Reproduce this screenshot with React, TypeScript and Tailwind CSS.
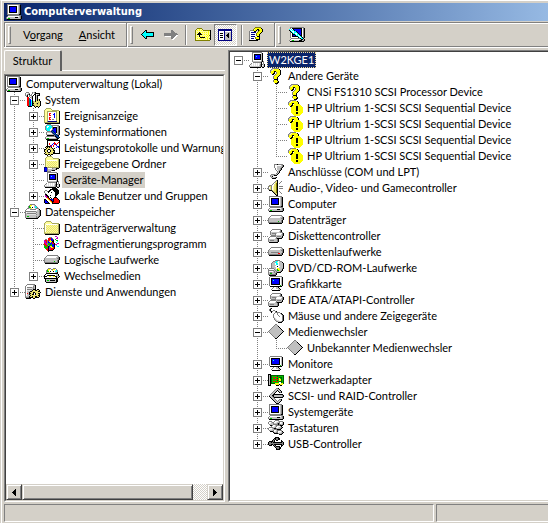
import { useState } from 'react'
import type { ReactNode } from 'react'
import clsx from 'clsx'

// 16-colour style palette for the small icons
const palette: Record<string, string> = {
  k: '#000000',
  d: '#404040',
  g: '#808080',
  s: '#c0c0c0',
  h: '#e0e0e0',
  w: '#ffffff',
  b: '#0000ff',
  n: '#000080',
  y: '#ffff00',
  l: '#ffff99',
  a: '#a8a860',
  p: '#e8e070',
  o: '#808000',
  r: '#ff0000',
  e: '#00c000',
  f: '#006000',
  c: '#00ffff',
  t: '#008080',
  m: '#c000c0',
}

const sprites: Record<string, string[]> = {
  computer: [
    '.ggggggggggggg..',
    '.gwwwwwwwwwwsgk.',
    '.gwkkkkkkkkwsgk.',
    '.gwkbbbbbbkwsgk.',
    '.gwkbbbbbbkwsgk.',
    '.gwkbbbbbbkwsgk.',
    '.gwkbbbbbbkwsgk.',
    '.gwkbbbbbbkwsgk.',
    '.gwkkkkkkkkwsgk.',
    '.gwwwwwwwwwwsgk.',
    '.ggggggggggggkk.',
    '..ggggggggggggg.',
    '.gwwwwwwwwwwwsgk',
    'gwssssssskkkssgk',
    'gseessssssssssgk',
    '.kkkkkkkkkkkkkk.',
  ],
  pc: [
    '...gggggggggg...',
    '...gwwwwwwwwsk..',
    '...gwkkkkkkksk..',
    '...gwkbbbbbksk..',
    '...gwkbcbbbksk..',
    '...gwkbbbbbksk..',
    '...gwkbbbbbksk..',
    '...gwkkkkkkksk..',
    '...gwwwwwwwwsk..',
    '...gssssssssgkg.',
    '....ggggggggk.g.',
    '..gwhwhwhwhsk.g.',
    '.ghwhwhwhwhgkgsk',
    'gwhwhwhwhwsgkwsk',
    'gssssssssssgkssk',
    '.kkkkkkkkkkk.kk.',
  ],
  tools: [
    '.ggg...gsgk.....',
    'gwwsg..gwskkkkk.',
    'gwggk.gwwkkwssk.',
    'gsk.gggwk.kskkk.',
    '.gk.gwsk..ksk...',
    '..rr.gsk..ksk...',
    '..rrt.sk..ksk...',
    '..rrtbwk..kskpk.',
    '..rrtbck..kpkpk.',
    '..rrtbckapkppppk',
    '..rrtbckappppapk',
    '..rrtbckkppakppk',
    '..rrtbckapppappk',
    '..rrtbckkapppppk',
    '...kkkk..kpkkpk.',
    '..........k..k..',
  ],
  events: [
    '..aaaaa.........',
    '.allllla........',
    'alllllllaaaaaaa.',
    'allaaaaaaaaaallk',
    'allawwwwwwwwallk',
    'allawrrwwwbwallk',
    'allawrwwwbbwallk',
    'allawrrwwwbwallk',
    'allawwwwwwbwallk',
    'allawrrwwwbwallk',
    'allawrwwwwwwallk',
    'allawrrwggwwallk',
    'allawwwwwwwwallk',
    'allgnnnnnnnnnllk',
    'aaaaaaaaaaaaaaak',
    '.kkkkkkkkkkkkkkk',
  ],
  sysinfo: [
    '...gggg.........',
    '..gccccgggggggg.',
    '.gcwwcccgwwwwsgk',
    '.gcwccccgkkkksgk',
    '.gcccccwgkbbksgk',
    '.gccccwwgbbbksgk',
    '..gcccwgnbbbksgk',
    '...ggggntnbbksgk',
    '..gssssgntnbksgk',
    '..gwwwwwgntnwsgk',
    '..gssssssgntnggk',
    '...kkkkkkkgntnk.',
    '..gggggggggkntn.',
    '.gwwwwwwwwwskntk',
    '.gseesssssssgkk.',
    '..kkkkkkkkkkkk..',
  ],
  perf: [
    '...kkkkkkkkkkkkk',
    '...kwwwwwwwwwwwk',
    '...kwwwwwwrwwwrk',
    '...kwrwwwbrrwrwk',
    '...kwrwwbwrbrwwk',
    '...kwwrbwrwwbwwk',
    '..kkkkbrwrwwwbbk',
    '.kpkpkpkwwwwbwbk',
    '..kpppppkpkwwwwk',
    'kkppkkpppkwwwwwk',
    'kppkwwkppkkwwwwk',
    'kppkwwkpppkwwwwk',
    '.kppkkpppkkwwwwk',
    'kppppppppkkkkkkk',
    '.kkpkkpkk.......',
    '...k..k.........',
  ],
  shared: [
    '...aaaaa........',
    '..allllla.......',
    '.alllllllaaaaaa.',
    '.allllllllllllak',
    '.alwwwwwwwwwwlak',
    '.alplplplplpllak',
    '.allplplplplplak',
    '.alplplplplpllak',
    '.allplplplplplak',
    '.alplplplplpllak',
    '.allplplplplplak',
    'nnnaaaaaaaaaaaak',
    'nbbgwwwwgssskkk.',
    'nbbgsssssssgk...',
    'nbbgsssgkkk.....',
    'nnngggg.........',
  ],
  users: [
    '........kkkkk...',
    '......kkkkkkkk..',
    '.gg..kkwwkkkkkk.',
    'gwwgkkwwwwkkkkk.',
    'gwwwkwwkwwwkkkk.',
    '.gwwwwwwwwwkkkk.',
    '.kkwwwwwwwwkkk..',
    '.mkkwwkwwwwkk...',
    '.mmkkwwwwwwk....',
    '..mrk.kwwwkkk...',
    '...yrk.kwkrrrk..',
    'kk..yrkbbkrrrrk.',
    'kbk..yrkbkrrrrrk',
    'kbbk..yrkkrrrrrk',
    'kbbbk..ykrrrrrrk',
    '.kkkkk..kkkkkkk.',
  ],
  storage: [
    '.....ggggg......',
    '....gyywwsg.....',
    '...geywwwscg....',
    '...geewkwsccg...',
    '..ggssywwwsggg..',
    '.gwwwggggggwwsk.',
    'gwwwwwwwwwwwssgk',
    'gggggggggggsssgk',
    'gwhhhhhhhhhgssgk',
    'gsgggggggggsssgk',
    'gshhhhhhhhhgssgk',
    'gsssssssssssssgk',
    'gseesssssssgsgk.',
    'gssssssssssggk..',
    '.kkkkkkkkkkkk...',
    '................',
  ],
  folder: [
    '................',
    '..aaaaa.........',
    '.allllla........',
    'alllllllaaaaaaa.',
    'alwwwwwwwwwwwlak',
    'awplplplplplplak',
    'awlplplplplplpak',
    'awplplplplplplak',
    'awlplplplplplpak',
    'awplplplplplplak',
    'awlplplplplplpak',
    'awplplplplplplak',
    'aplplplplplplpak',
    'aaaaaaaaaaaaaaak',
    '.kkkkkkkkkkkkkk.',
    '................',
  ],
  defrag: [
    '...........mm...',
    '.....ggg.....m..',
    '....rrrbg...mm..',
    '.gg.rrrbbg.e....',
    'mrrgrrybbk..ee..',
    'mmrgbyyykk...c..',
    'mmrgbbybrk..c...',
    'rmmgeebbrrk..mm.',
    'rrmgeebebbkmm...',
    'erregeeebbk.c...',
    'eerekbyybbk..cc.',
    'eeeekmmyyrk.....',
    '.eerkmmrrrk.....',
    '..rrkmrrrk......',
    '...rkkkkk.......',
    '....k...........',
  ],
  disk: [
    '................',
    '................',
    '................',
    '...ggggggggggg..',
    '..gwwwwwwwwwwsg.',
    '.gwwwwwwwwwwssgk',
    'gssssssssssssggk',
    'gsssssssssssssgk',
    'gssssssssssssgk.',
    'gsssssssssessgk.',
    'ggggggggggggggk.',
    '.kkkkkkkkkkkkk..',
    '................',
    '................',
    '................',
    '................',
  ],
  removable: [
    '....ggg..ggg....',
    '...gyywggyywg...',
    '..geywwwywwscg..',
    '..geewkwwkwccg..',
    '..gssywwwwwsgk..',
    '..kkkkkkkkkkkk..',
    '.kwwwwwwwwwwssk.',
    'kwwkkkkkkkkwssk.',
    'kkkwwyywwyykkssk',
    'kwwwwwwwwwwwksk.',
    'kkkkkkkkkkkkkk..',
    '.ksssssssssskk..',
    '.kseeskkkkkskk..',
    '.ksssssssssskk..',
    '..kkkkkkkkkkk...',
    '................',
  ],
  services: [
    '..gggggggg......',
    '.gwwwwwwsgk.....',
    'gwwwwwwwgsk.....',
    'gwgggggsgsk.....',
    'gwhhhhhsgsk.....',
    'gwgggggskkk.kk..',
    'gwhhhhskppkkppk.',
    'gwssskkppppppkk.',
    'gwsskpppkkpppppk',
    'gwrskkppkwkppkk.',
    'gwsskppkkwkpppk.',
    'gwssskpppppppkk.',
    'gssskppkppkkppk.',
    'ggggkkkkppkkkk..',
    '.kkkkk..kk......',
    '................',
  ],
  question: [
    '....ggggggg.....',
    '...gslyyyyyk....',
    '..gslyyyyyyyk...',
    '..gyyykkyyyyk...',
    '..gyyyk.gyyyk...',
    '...yykk.gyyyk...',
    '....kk.gyyyyk...',
    '......gyyyyk....',
    '.....gyyyyk.....',
    '.....gyyyk......',
    '.....gyyyk......',
    '......kkkk......',
    '.....gyyyk......',
    '.....gyyyyk.....',
    '......yyykk.....',
    '.......kkk......',
  ],
  warning: [
    '...gggggg.......',
    '..gslyyyyyk.....',
    '.gslyyyyyyyk....',
    '.gyyykkyyyyk....',
    '.gyyyk.yyyyyy...',
    '..yykkyyyyyyyy..',
    '...kkyyyykkyyyy.',
    '....yyyyykkyyyyy',
    '....yyyyykkyyyyy',
    '....yyyyykkyyyyy',
    '....yyyyykkyyyyy',
    '....yyyyyyyyyyyy',
    '....yyyyykkyyyyy',
    '.....yyyykkyyyy.',
    '......yyyyyyyy..',
    '.......yyyyyy...',
  ],
  port: [
    '......gggkggggg.',
    '......gwwwwwwsgk',
    '......gwwsssssgk',
    '......gwwssssgk.',
    '.......gwsssgk..',
    '.......gwsssgk..',
    '........gwsgk...',
    '.........gsk....',
    '.........gsk....',
    '........gsk.....',
    '...ggggssk......',
    '..gssskkk.......',
    '..gsk...........',
    '...gsssgk.......',
    '....kkkk........',
    '................',
  ],
  audio: [
    '........gk......',
    '.......gpk...g..',
    '......gppk..g...',
    '.....gwpok.g....',
    '....gwppok......',
    '.gggwwppok......',
    'gapgwlppok.gggg.',
    'gwpgwlppok......',
    'gwpgwlppok.gggg.',
    'gapgwlppok......',
    '.kkkalppok......',
    '....kappok.g....',
    '.....kapok..g...',
    '......kapk...g..',
    '.......kak......',
    '........kk......',
  ],
  floppyCtl: [
    '................',
    '....ggggggggg...',
    '...gwwwwwwwwgk..',
    '..gwwwwwwwwsgk..',
    '..gsssssssssggg.',
    '..gsggggswwwwwgk',
    '..gssssgwwwwwsgk',
    '...gggggssssssgk',
    '..ggggggsggggsk.',
    '.gwwwwwwgssssgk.',
    'gwwwwwwsgkkkkk..',
    'gssssssssgk.....',
    'gsggggsssgk.....',
    'gssssssssgk.....',
    '.kkkkkkkkk......',
    '................',
  ],
  floppy: [
    '................',
    '................',
    '................',
    '...ggggggggggg..',
    '..gwwwwwwwwwwsg.',
    '.gwwwwwwwwwwssgk',
    'gssssssssssssggk',
    'gsssssssssssssgk',
    'gssggggggggsssgk',
    'gsssssssssrrsgk.',
    'ggggggggggggggk.',
    '.kkkkkkkkkkkkk..',
    '................',
    '................',
    '................',
    '................',
  ],
  cd: [
    '.......ggggg....',
    '.....ggsccwsgg..',
    '....gsscclwsssk.',
    '...gssswccwssssk',
    '...gssswccwssssk',
    '...gsssswwwssssk',
    '...gssswwkwwsssk',
    '...gsssswwwssssk',
    '.gggggsswyysssgk',
    'gwwwwwgsseyyssk.',
    'ggggggsgseeysgk.',
    'gwwwwsgsgsssgk..',
    'gsggssgsgkkkk...',
    'gseesssgk.......',
    'ggggggggk.......',
    '.kkkkkkk........',
  ],
  monitor: [
    '..gggggggggggg..',
    '.gwwwwwwwwwwwsk.',
    '.gwkkkkkkkkkwsk.',
    '.gwkbbbbbbbkwsk.',
    '.gwkbcbbbbbkwsk.',
    '.gwkbbbbbbbkwsk.',
    '.gwkbbbbbbbkwsk.',
    '.gwkbbbbbbbkwsk.',
    '.gwkkkkkkkkkwsk.',
    '.gwwwwwwwwwwesk.',
    '..kkkkkkkkkkkk..',
    '.....gwwssk.....',
    '....gwwwsssk....',
    '...gwwwwwwssk...',
    '....kkkkkkkk....',
    '................',
  ],
  mouse: [
    '..gk............',
    '.gk.............',
    '.gk..gg.........',
    '..gkg..gk.......',
    '...k...ggggg....',
    '......gwwgwwgk..',
    '.....gwwwgwwwgk.',
    '.....gwwwwgwwwgk',
    '.....gwwwwwgwwgk',
    '.....ghwwwwwwwgk',
    '......ghwwwwwwgk',
    '......gshwwwwwgk',
    '.......gshhwwwgk',
    '........ggsssgk.',
    '..........kkkk..',
    '................',
  ],
  diamond: [
    '.......gg.......',
    '......gssg......',
    '.....gssssk.....',
    '....gssssssk....',
    '...gssssssssk...',
    '..gssssssssssk..',
    '.gssssssssssssk.',
    'gssssssssssssssk',
    '.gssssssssssssk.',
    '..gssssssssssk..',
    '...gssssssssk...',
    '....gssssssk....',
    '.....gssssk.....',
    '......gssk......',
    '.......kk.......',
    '................',
  ],
  network: [
    '................',
    '................',
    'kkk.............',
    'kskfffffffffffff',
    'kskfeeeeefeeeeef',
    'kskferrerrefffef',
    'kskfeeeeefeyefef',
    'kskferrerreyyfef',
    'kskfeeeeefeyyfef',
    'kskferrerrefffef',
    'kskfeeeeeeewwfef',
    'kskffffyyyywwyyf',
    'ksk....ypypkypy.',
    'kkk.....kkk.kk..',
    '................',
    '................',
  ],
  scsi: [
    '........ggk.....',
    '.......gsssk....',
    '......gsskssk...',
    '.....gssk.kssk..',
    '....gssk...kgk..',
    '...gssk.........',
    '..gsskkkkkkkkkk.',
    '.gsskkssssssssgk',
    '.kssgkssssssssgk',
    '..kssgkkkkkkkkk.',
    '...kssg.........',
    '....kssg...ggk..',
    '.....kssg.gssk..',
    '......kssgssk...',
    '.......ksssk....',
    '........kkk.....',
  ],
  keyboard: [
    '.......gggg.....',
    '.ggg..gwwwsgggg.',
    'gwwsggwwhssgwwsk',
    'gwhssgsssgkgwhsk',
    '.gsssgggggkggsgk',
    '..kkgwwsggggkkk.',
    '...gwwhsgwwwsk..',
    '.ggggssgwwhssgk.',
    'gwwwsgkkgsssgk..',
    'gwhhssgggkkkk...',
    '.gsssgwwsggggg..',
    '..kkkgwhsgwwwsk.',
    '.....kgsggwhhsgk',
    '......kkkkgssgk.',
    '...........kkk..',
    '................',
  ],
  usb: [
    '................',
    '.......kkkk.....',
    '......kkggkk....',
    '.....kgkggkk....',
    '....kgk.kk...k..',
    '.kkkkgk......kk.',
    'kggkgkkkkkkkkkgk',
    'kggggggggggggggk',
    'kggkkgkkkkkkkkgk',
    '.kkk.kgk.....kk.',
    '......kgkkkk.k..',
    '.......kgggkk...',
    '........kggkk...',
    '........kkkk....',
    '................',
    '................',
  ],
  back: [
    '................',
    '................',
    '................',
    '....kk..........',
    '...kck..........',
    '..kcckkkkkkkk...',
    '.kcccccccccck...',
    'kccccccccccck...',
    '.kcccccccccck...',
    '..kcckkkkkkkk...',
    '...kck..........',
    '....kk..........',
    '................',
    '................',
    '................',
    '................',
  ],
  forward: [
    '................',
    '................',
    '................',
    '.......gg.......',
    '.......ggg......',
    '.......gggg.....',
    'ggggggggggggg...',
    'gggggggggggggg..',
    'ggggggggggggww..',
    '.wwwwwwggggww...',
    '.......gggww....',
    '.......ggww.....',
    '........ww......',
    '................',
    '................',
    '................',
  ],
  up: [
    '................',
    '..ooooo.........',
    '.ollyllo........',
    'olylylyloooooook',
    'ollllllllllllylk',
    'olylkylylylylylk',
    'ollkkklllllllylk',
    'olkkkkkylylylylk',
    'olllklllllllylok',
    'olylkylylylylylk',
    'ollllkkkkkllyllk',
    'olylylylylylylok',
    'olllllllllllyllk',
    'ooooooooooooooo.',
    '................',
    '................',
  ],
  panes: [
    '................',
    '................',
    'nnnnnnnnnnnnnn..',
    'nnnnnnnnnnnnnn..',
    'nwwwwwnwwwwwwn..',
    'nwwwwwnssssssn..',
    'nwkkkwnssskssn..',
    'nwwwwwnsskkssn..',
    'nwkkkwnskkkssn..',
    'nwwwwwnsskkssn..',
    'nwkkkwnssskssn..',
    'nwwwwwnssssssn..',
    'nwwwwwnssssssn..',
    'nnnnnnnnnnnnnn..',
    '................',
    '................',
  ],
  help: [
    '......oooooo....',
    '.....oyyyyyyk...',
    '....olyykkyyyk..',
    '.gggoyyk.koyyk..',
    'gwwwwkk..oyyyk..',
    'gwnnnnnwoyyyk...',
    'gwwwwwwoyyyk....',
    'gwnnnnwoyyk.....',
    'gwwwwwwoyyk.....',
    'gwnnnnwwkkk.....',
    'gwwwwwoyyyk.....',
    'gwnnnwoyyyk.....',
    'gwwwwwwkkkk.....',
    'kkkkkkkkk.......',
    '................',
    '................',
  ],
  scan: [
    '.gggggggggggggg.',
    '.gwkkkkkkkkkkwgk',
    'cwcwkbbbbbbbkwgk',
    'kcwcckbbbbbbkwgk',
    '.kcwwcckbbbbkwgk',
    '.gkcwccckbbbkwgk',
    '.gwkccwwckbbkwgk',
    '.gwkkkcwcckbkwgk',
    '.gwkbbkccwckkwgk',
    '.gwkkkkkkcwckwgk',
    '.gwwwwwwwkcwckgk',
    '..gggggggggkcck.',
    '.gwwwwwwwwwskksk',
    'gwseessssskkksgk',
    '.kkkkkkkkkkkkkk.',
    '................',
  ],
}

const Icon = ({ name }: { name: string }) => (
  <svg viewBox="0 0 16 16" className="size-4 shrink-0" shapeRendering="crispEdges" aria-hidden="true">
    {sprites[name].flatMap((row, y) =>
      (row.match(/(.)\1*/g) || []).reduce<{ x: number; cells: ReactNode[] }>(
        (acc, run) => {
          if (palette[run[0]]) {
            acc.cells.push(
              <rect key={`${acc.x}-${y}`} x={acc.x} y={y} width={run.length} height={1} fill={palette[run[0]]} />
            )
          }
          return { x: acc.x + run.length, cells: acc.cells }
        },
        { x: 0, cells: [] }
      ).cells
    )}
  </svg>
)

interface TreeItem {
  id: string
  label: string
  icon: string
  collapsed?: boolean
  children?: TreeItem[]
}

const consoleTree: TreeItem[] = [
  {
    id: 'system',
    label: 'System',
    icon: 'tools',
    children: [
      { id: 'events', label: 'Ereignisanzeige', icon: 'events', collapsed: true },
      { id: 'sysinfo', label: 'Systeminformationen', icon: 'sysinfo', collapsed: true },
      { id: 'perf', label: 'Leistungsprotokolle und Warnung', icon: 'perf', collapsed: true },
      { id: 'shares', label: 'Freigegebene Ordner', icon: 'shared', collapsed: true },
      { id: 'devices', label: 'Geräte-Manager', icon: 'pc' },
      { id: 'users', label: 'Lokale Benutzer und Gruppen', icon: 'users', collapsed: true },
    ],
  },
  {
    id: 'storage',
    label: 'Datenspeicher',
    icon: 'storage',
    children: [
      { id: 'diskmgmt', label: 'Datenträgerverwaltung', icon: 'folder' },
      { id: 'defrag', label: 'Defragmentierungsprogramm', icon: 'defrag' },
      { id: 'logical', label: 'Logische Laufwerke', icon: 'disk' },
      { id: 'removable', label: 'Wechselmedien', icon: 'removable', collapsed: true },
    ],
  },
  { id: 'services', label: 'Dienste und Anwendungen', icon: 'services', collapsed: true },
]

const deviceTree: TreeItem[] = [
  {
    id: 'host',
    label: 'W2KGE1',
    icon: 'pc',
    children: [
      {
        id: 'other',
        label: 'Andere Geräte',
        icon: 'question',
        children: [
          { id: 'cnsi', label: 'CNSi FS1310 SCSI Processor Device', icon: 'question' },
          { id: 'hp1', label: 'HP Ultrium 1-SCSI SCSI Sequential Device', icon: 'warning' },
          { id: 'hp2', label: 'HP Ultrium 1-SCSI SCSI Sequential Device', icon: 'warning' },
          { id: 'hp3', label: 'HP Ultrium 1-SCSI SCSI Sequential Device', icon: 'warning' },
          { id: 'hp4', label: 'HP Ultrium 1-SCSI SCSI Sequential Device', icon: 'warning' },
        ],
      },
      { id: 'ports', label: 'Anschlüsse (COM und LPT)', icon: 'port', collapsed: true },
      { id: 'audio', label: 'Audio-, Video- und Gamecontroller', icon: 'audio', collapsed: true },
      { id: 'computer', label: 'Computer', icon: 'computer', collapsed: true },
      { id: 'disks', label: 'Datenträger', icon: 'disk', collapsed: true },
      { id: 'fdc', label: 'Diskettencontroller', icon: 'floppyCtl', collapsed: true },
      { id: 'fdd', label: 'Diskettenlaufwerke', icon: 'floppy', collapsed: true },
      { id: 'cdrom', label: 'DVD/CD-ROM-Laufwerke', icon: 'cd', collapsed: true },
      { id: 'display', label: 'Grafikkarte', icon: 'monitor', collapsed: true },
      { id: 'ide', label: 'IDE ATA/ATAPI-Controller', icon: 'floppyCtl', collapsed: true },
      { id: 'mouse', label: 'Mäuse und andere Zeigegeräte', icon: 'mouse', collapsed: true },
      {
        id: 'changer',
        label: 'Medienwechsler',
        icon: 'diamond',
        children: [{ id: 'unknown', label: 'Unbekannter Medienwechsler', icon: 'diamond' }],
      },
      { id: 'monitors', label: 'Monitore', icon: 'monitor', collapsed: true },
      { id: 'network', label: 'Netzwerkadapter', icon: 'network', collapsed: true },
      { id: 'scsi', label: 'SCSI- und RAID-Controller', icon: 'scsi', collapsed: true },
      { id: 'sysdev', label: 'Systemgeräte', icon: 'computer', collapsed: true },
      { id: 'keyboards', label: 'Tastaturen', icon: 'keyboard', collapsed: true },
      { id: 'usb', label: 'USB-Controller', icon: 'usb', collapsed: true },
    ],
  },
]

interface GuideProps {
  up?: boolean
  down?: boolean
  branch?: boolean
  box?: 'plus' | 'minus'
}

// One 19px tree cell: dotted connector lines and the optional +/- box
const Guide = ({ up, down, branch, box }: GuideProps) => (
  <svg viewBox="0 0 19 16" className="h-4 w-[19px] shrink-0" shapeRendering="crispEdges" aria-hidden="true">
    <g stroke="#808080" strokeDasharray="1 1" fill="none">
      {up && <path d="M8.5 0V8" />}
      {down && <path d="M8.5 8V16" />}
      {branch && <path d="M8 8.5H19" />}
    </g>
    {box && (
      <>
        <rect x="4.5" y="4.5" width="8" height="8" fill="#fff" stroke="#808080" />
        <path d="M6 8h5v1h-5z" fill="#000" />
        {box === 'plus' && <path d="M8 6h1v5h-1z" fill="#000" />}
      </>
    )}
  </svg>
)

interface NodeProps {
  item: TreeItem
  guides: boolean[]
  first: boolean
  last: boolean
  selected: string
  selectedClass: string
  onSelect: (id: string) => void
}

const TreeNode = ({ item, guides, first, last, selected, selectedClass, onSelect }: NodeProps) => {
  const [open, setOpen] = useState(!item.collapsed)
  const expandable = item.collapsed || !!item.children
  const children = open ? item.children || [] : []

  return (
    <li role="treeitem" aria-expanded={expandable ? open : undefined} aria-selected={selected === item.id}>
      <div className="flex h-4 items-center">
        {guides.map((line, i) => (
          <Guide key={i} up={line} down={line} />
        ))}
        {expandable ? (
          <button type="button" aria-label={item.label} onClick={() => setOpen(!open)} className="shrink-0">
            <Guide up={!first} down={!last} branch box={open ? 'minus' : 'plus'} />
          </button>
        ) : (
          <Guide up={!first} down={!last} branch />
        )}
        <Icon name={item.icon} />
        <button
          type="button"
          onClick={() => onSelect(item.id)}
          className={clsx('ml-0.5 h-4 px-0.5 leading-4 whitespace-nowrap', selected === item.id && selectedClass)}
        >
          {item.label}
        </button>
      </div>
      {children.length > 0 && (
        <ul role="group">
          {children.map((child, i) => (
            <TreeNode
              key={child.id}
              item={child}
              guides={[...guides, !last]}
              first={false}
              last={i === children.length - 1}
              selected={selected}
              selectedClass={selectedClass}
              onSelect={onSelect}
            />
          ))}
        </ul>
      )}
    </li>
  )
}

const Grip = () => <div className="h-[18px] w-[3px] shrink-0 border border-t-white border-r-[#808080] border-b-[#808080] border-l-white" />

const Separator = () => <div className="h-5 w-0.5 shrink-0 border-r border-l border-r-white border-l-[#808080]" />

const BandEdge = () => <div className="w-0.5 shrink-0 self-stretch border-r border-l border-r-white border-l-[#808080]" />

const ToolButton = ({ icon, label, pressed }: { icon: string; label: string; pressed?: boolean }) => (
  <button
    type="button"
    aria-label={label}
    aria-pressed={pressed}
    className={clsx(
      'flex h-[22px] w-[23px] shrink-0 items-center justify-center',
      pressed &&
        'border border-t-[#808080] border-r-white border-b-white border-l-[#808080] bg-[repeating-conic-gradient(#fff_0_25%,#d4d0c8_0_50%)] bg-size-[2px_2px]'
    )}
  >
    <Icon name={icon} />
  </button>
)

const ScrollButton = ({ label, children }: { label: string; children: ReactNode }) => (
  <button
    type="button"
    aria-label={label}
    className="flex size-4 shrink-0 items-center justify-center border border-t-[#d4d0c8] border-r-[#404040] border-b-[#404040] border-l-[#d4d0c8] bg-[#d4d0c8] shadow-[inset_1px_1px_#fff,inset_-1px_-1px_#808080]"
  >
    <svg viewBox="0 0 4 7" className="h-[7px] w-1" shapeRendering="crispEdges" aria-hidden="true">
      {children}
    </svg>
  </button>
)

const App = () => {
  const [consoleItem, setConsoleItem] = useState('devices')
  const [device, setDevice] = useState('host')

  return (
    <div className="flex min-h-screen flex-col overflow-hidden border-t border-t-white border-l border-l-[#d4d0c8] bg-[#d4d0c8] font-[Lato,sans-serif] text-[11px] text-black">
      <div className="flex grow flex-col border-l border-white pt-0.5 pb-px pl-0.5">
        {/* Title bar */}
        <header className="flex h-[18px] shrink-0 items-center gap-0.5 bg-linear-to-r from-[#0a246a] to-[#96b9e3] pl-0.5 text-white">
          <Icon name="computer" />
          <h1 className="font-['DejaVu_Sans_Condensed','DejaVu_Sans',sans-serif] text-[11px] leading-4 font-bold whitespace-nowrap">
            Computerverwaltung
          </h1>
        </header>

        {/* Menu and toolbar bands */}
        <div className="mt-px flex h-[26px] shrink-0 items-center border-y border-t-[#808080] border-b-white shadow-[inset_0_1px_#fff,inset_0_-1px_#808080]">
          <BandEdge />
          <div className="w-0.5 shrink-0" />
          <Grip />
          <nav className="flex w-[115px] shrink-0 gap-4 pl-3">
            <button type="button" className="leading-4">
              V<u>o</u>rgang
            </button>
            <button type="button" className="leading-4">
              <u>A</u>nsicht
            </button>
          </nav>
          <BandEdge />
          <div className="flex h-full w-[146px] shrink-0 items-center gap-0.5 pl-0.5">
            <Grip />
            <div className="flex items-center pl-0.5">
              <ToolButton icon="back" label="Zurück" />
              <ToolButton icon="forward" label="Vorwärts" />
            </div>
            <Separator />
            <div className="flex items-center pl-0.5">
              <ToolButton icon="up" label="Eine Ebene nach oben" />
              <ToolButton icon="panes" label="Konsolenstruktur ein-/ausblenden" pressed />
            </div>
            <div className="flex items-center gap-0.5 pl-0.5">
              <Separator />
              <ToolButton icon="help" label="Hilfe" />
            </div>
          </div>
          <BandEdge />
          <div className="flex items-center gap-1 pl-0.5">
            <Grip />
            <ToolButton icon="scan" label="Nach geänderter Hardware suchen" />
          </div>
        </div>

        <main className="mt-0.5 flex min-h-0 grow gap-[3px]">
          {/* Console tree */}
          <section className="flex w-[221px] shrink-0 flex-col">
            <div className="flex h-[21px] shrink-0 items-stretch" role="tablist">
              <button
                type="button"
                role="tab"
                aria-selected="true"
                className="w-[58px] rounded-t-xs border-t border-r-2 border-l border-t-white border-r-[#606060] border-l-white leading-4"
              >
                Struktur
              </button>
              <div className="grow border-b border-white" />
            </div>
            <div className="mt-[3px] flex grow flex-col border border-t-[#808080] border-r-white border-b-white border-l-[#808080]">
              <div className="flex grow flex-col overflow-hidden border border-t-[#404040] border-r-[#d4d0c8] border-b-[#d4d0c8] border-l-[#404040] bg-white">
                <div className="flex h-4 items-center">
                  <Icon name="computer" />
                  <span className="ml-0.5 px-0.5 leading-4 whitespace-nowrap">Computerverwaltung (Lokal)</span>
                </div>
                <ul role="tree" aria-label="Struktur" className="grow">
                  {consoleTree.map((item, i) => (
                    <TreeNode
                      key={item.id}
                      item={item}
                      guides={[]}
                      first={false}
                      last={i === consoleTree.length - 1}
                      selected={consoleItem}
                      selectedClass="bg-[#d4d0c8]"
                      onSelect={setConsoleItem}
                    />
                  ))}
                </ul>
                <div className="flex h-4 shrink-0 bg-[repeating-conic-gradient(#fff_0_25%,#d4d0c8_0_50%)] bg-size-[2px_2px]">
                  <ScrollButton label="Nach links">
                    <path d="M3 0h1v7h-1zM2 1h1v5h-1zM1 2h1v3h-1zM0 3h1v1h-1z" />
                  </ScrollButton>
                  <div className="flex grow pr-3.5">
                    <div className="grow border border-t-[#d4d0c8] border-r-[#404040] border-b-[#404040] border-l-[#d4d0c8] bg-[#d4d0c8] shadow-[inset_1px_1px_#fff,inset_-1px_-1px_#808080]" />
                  </div>
                  <ScrollButton label="Nach rechts">
                    <path d="M0 0h1v7h-1zM1 1h1v5h-1zM2 2h1v3h-1zM3 3h1v1h-1z" />
                  </ScrollButton>
                </div>
              </div>
            </div>
          </section>

          {/* Device list */}
          <section className="flex min-w-0 grow border-t border-b border-l border-t-[#808080] border-b-white border-l-[#808080]">
            <div className="grow overflow-hidden border-t border-b border-l border-t-[#404040] border-b-[#d4d0c8] border-l-[#404040] bg-white">
              <ul role="tree" aria-label="Geräte">
                {deviceTree.map((item) => (
                  <TreeNode
                    key={item.id}
                    item={item}
                    guides={[]}
                    first
                    last
                    selected={device}
                    selectedClass="bg-[#0a246a] text-white outline-1 -outline-offset-1 outline-dotted outline-[#f5db95]"
                    onSelect={setDevice}
                  />
                ))}
              </ul>
            </div>
          </section>
        </main>

        {/* Status bar */}
        <footer className="mt-0.5 flex h-[18px] shrink-0 gap-0.5">
          <div className="w-[79%] border border-t-[#808080] border-r-white border-b-white border-l-[#808080]" />
          <div className="grow border-t border-b border-l border-t-[#808080] border-b-white border-l-[#808080]" />
        </footer>
      </div>
    </div>
  )
}

export default App
